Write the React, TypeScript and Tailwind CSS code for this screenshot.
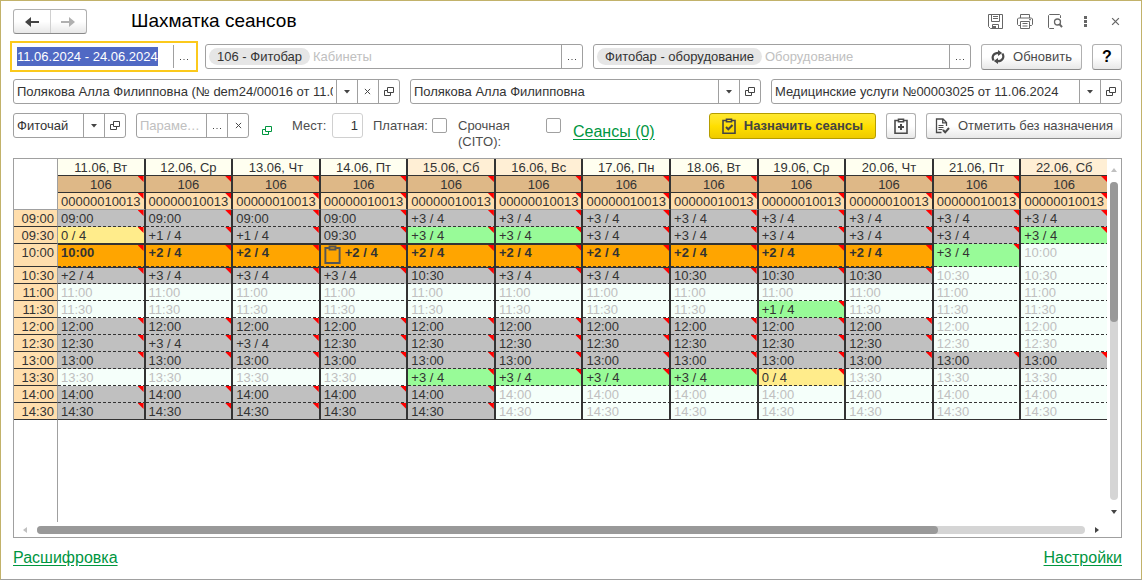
import { useEffect, useRef } from "react";
import type { ReactNode } from "react";
import { clsx } from "clsx";

type Tone = "busy" | "free" | "open" | "few" | "picked";

type Slot = { text: string; tone: Tone; icon?: boolean };

const days = [
  { label: "11.06, Вт" },
  { label: "12.06, Ср" },
  { label: "13.06, Чт" },
  { label: "14.06, Пт" },
  { label: "15.06, Сб", weekend: true },
  { label: "16.06, Вс", weekend: true },
  { label: "17.06, Пн" },
  { label: "18.06, Вт" },
  { label: "19.06, Ср" },
  { label: "20.06, Чт" },
  { label: "21.06, Пт" },
  { label: "22.06, Сб", weekend: true },
];

// b = busy, f = free, g = has places, y = no places left, o = picked
// a number after the letter is the count of taken places, otherwise the time is shown
const schedule: [string, string][] = [
  ["09:00", "b b b b b3 b3 b3 b3 b3 b3 b3 b3"],
  ["09:30", "y0 b1 b1 b g3 g3 b3 b3 b3 b3 b3 g3"],
  ["10:00", "o o2 o2 i2 o2 o2 o2 o2 o2 o2 g3 f"],
  ["10:30", "b2 b3 b3 b3 b b3 b3 b b b f f"],
  ["11:00", "f f f f f f f f f f f f"],
  ["11:30", "f f f f f f f f g1 f f f"],
  ["12:00", "b b b b b b b b b b f f"],
  ["12:30", "b b3 b3 b b b b b b b f f"],
  ["13:00", "b b b b b b b b b b b b"],
  ["13:30", "f f f f g3 g3 g3 g3 y0 f f f"],
  ["14:00", "b b b b b f f f f f f f"],
  ["14:30", "b b b b b f f f f f f f"],
];

const codes: Record<string, Tone> = {
  b: "busy",
  f: "free",
  g: "open",
  y: "few",
  o: "picked",
  i: "picked",
};

const tones: Record<Tone, string> = {
  busy: "bg-[#c0c0c0]",
  free: "bg-[#f5fffa] text-[#c0c0c0]",
  open: "bg-[#98fb98]",
  few: "bg-[#ffec8b]",
  picked: "bg-[#ffa500] font-bold",
};

function parseSlot(code: string, time: string): Slot {
  const taken = code.slice(1);
  const text = taken === "" ? time : taken === "0" ? "0 / 4" : `+${taken} / 4`;
  return { text, tone: codes[code[0]], icon: code[0] === "i" };
}

const rows = schedule.map(([time, row]) => ({
  time,
  slots: row.split(" ").map((code) => parseSlot(code, time)),
}));

/* ---------- icons ---------- */

function OpenIcon() {
  return (
    <svg viewBox="0 0 10 10" className="size-[10px]" fill="none" stroke="currentColor">
      <path d="M3.5.5h6v5h-6zM3 3.500H.5v5h6V6" />
    </svg>
  );
}

function DownIcon() {
  return (
    <svg viewBox="0 0 6 4" className="h-1 w-1.5" fill="currentColor">
      <path d="M0 0h6L3 3.500z" />
    </svg>
  );
}

function CrossIcon({ className }: { className?: string }) {
  return (
    <svg viewBox="0 0 8 8" className={className} fill="none" stroke="currentColor" strokeWidth="1.100">
      <path d="M1 1l6 6M7 1L1 7" />
    </svg>
  );
}

function DotsIcon() {
  return (
    <svg viewBox="0 0 8 2" className="mt-1.5 h-0.5 w-2" fill="currentColor">
      <path d="M0 0h1v1H0zM3.500 0h1v1h-1zM7 0h1v1H7z" />
    </svg>
  );
}

function ArrowIcon({ flip }: { flip?: boolean }) {
  return (
    <svg
      viewBox="0 0 14 10"
      className={clsx("h-2.5 w-3.5", flip && "rotate-180")}
      fill="none"
      stroke="currentColor"
      strokeWidth="2"
    >
      <path d="M14 5H3" />
      <path d="M6 0v10L0 5z" fill="currentColor" stroke="none" />
    </svg>
  );
}

function ClipboardIcon({ mark, className }: { mark?: "check" | "plus"; className?: string }) {
  return (
    <svg
      viewBox="0 0 14 16"
      className={clsx("shrink-0", className ?? "h-4 w-3.5")}
      fill="none"
      stroke="currentColor"
      strokeWidth="1.600"
    >
      <path d="M4 2.500H1v12.700h12V2.500h-3" />
      <path d="M4.500 1.200h5v2.600h-5z" />
      {mark === "check" && <path d="M4 9l2.300 2.300L10.500 7" strokeWidth="2" />}
      {mark === "plus" && <path d="M7 6v6M4 9h6" strokeWidth="2" />}
    </svg>
  );
}

function RefreshIcon() {
  return (
    <svg viewBox="0 0 14 14" className="size-3.5" fill="none" stroke="currentColor" strokeWidth="2.200">
      <path d="M2.600 10.500C.2 6.500 2.800 2.800 7.500 2.800" />
      <path d="M11.400 3.500C13.800 7.500 11.200 11.200 6.500 11.200" />
      <path d="M7 0l4.200 2.900L7 6zM7 14l-4.200-2.900L7 8z" fill="currentColor" stroke="none" />
    </svg>
  );
}

function DocCheckIcon() {
  return (
    <svg viewBox="0 0 15 16" className="h-4 w-[15px]" fill="none" stroke="currentColor" strokeWidth="1.300">
      <path d="M6.500 14.500H1.500V1H8l3.500 3.500V8M7.700 1v3.800h3.800" />
      <path d="M3.500 7.500h5M3.500 9.500h5M3.500 11.500h4" strokeWidth="1" />
      <path d="M8 12l2.200 2.300L14 10" strokeWidth="2" />
    </svg>
  );
}

function SaveIcon() {
  return (
    <svg viewBox="0 0 15 15" className="size-[15px]" fill="none" stroke="currentColor">
      <path d="M.5.5h14v14H2.500l-2-2z" />
      <path d="M3.500.5v7h8v-7M5 2.500h5M5 4.500h5M4.500 14.500v-4h6v4" />
      <path d="M5 12h3v2.500H5z" fill="currentColor" stroke="none" />
    </svg>
  );
}

function PrintIcon() {
  return (
    <svg viewBox="0 0 16 15" className="h-[15px] w-4" fill="none" stroke="currentColor">
      <path d="M3.500 4V.5h9V4M3.500 11.500h-2l-1-1V5l1-1h13l1 1v5.500l-1 1h-2" />
      <path d="M3.500 7.500h9v7h-9zM5.500 9.500h5M5.500 12h5M12 5.700h2" />
    </svg>
  );
}

function PreviewIcon() {
  return (
    <svg viewBox="0 0 15 15" className="size-[15px]" fill="none" stroke="currentColor">
      <path d="M6 14.500H1.500l-1-1v-12l1-1h10l1 1V4" />
      <circle cx="9.500" cy="8" r="3" strokeWidth="1.300" />
      <path d="M11.500 10.200l2.500 3" strokeWidth="2" />
    </svg>
  );
}

/* ---------- controls ---------- */

const fieldButton =
  "flex w-[21px] shrink-0 items-center justify-center border-l border-[#a0a0a0] text-[#444]";

const raised =
  "flex h-[26px] items-center justify-center rounded-[3px] border border-[#b0b0b0] border-b-[#8a8a8a] bg-linear-to-b from-white from-50% to-[#e8e8e8] text-[#4a4a4a]";

const checkbox = "mt-[5px] size-[15px] appearance-none rounded-[2px] border border-[#a0a0a0]";

type FieldProps = {
  label: string;
  value?: string;
  placeholder?: string;
  chip?: string;
  buttons: ("down" | "cross" | "open" | "dots")[];
  className?: string;
};

const buttonLabels = { down: "Выбрать", cross: "Очистить", open: "Открыть", dots: "Подобрать" };

function Field({ label, value, placeholder, chip, buttons, className }: FieldProps) {
  return (
    <div className={clsx("flex h-[25px] min-w-0 rounded-[3px] border border-[#a0a0a0] bg-white", className)}>
      {chip && (
        <span className="my-auto ml-[3px] shrink-0 rounded-full bg-[#e6e6e6] px-2 leading-[17px]">
          {chip}
        </span>
      )}
      <input
        aria-label={label}
        defaultValue={value}
        placeholder={placeholder}
        className="w-0 min-w-0 flex-1 px-[3px] outline-none placeholder:text-[#c0c0c0] placeholder-shown:text-ellipsis"
      />
      {buttons.map((b) => (
        <button key={b} type="button" aria-label={buttonLabels[b]} className={fieldButton}>
          {b === "down" && <DownIcon />}
          {b === "cross" && <CrossIcon className="size-[7px]" />}
          {b === "open" && <OpenIcon />}
          {b === "dots" && <DotsIcon />}
        </button>
      ))}
    </div>
  );
}

function PeriodField() {
  const ref = useRef<HTMLInputElement>(null);

  useEffect(() => {
    ref.current?.focus();
    ref.current?.select();
  }, []);

  return (
    <div className="-mx-[3px] flex h-[31px] w-[188px] shrink-0 border-2 border-[#fbc91c] bg-white py-0.5">
      <input
        ref={ref}
        aria-label="Период"
        defaultValue="11.06.2024 - 24.06.2024"
        className="w-0 flex-1 pl-[5px] outline-none selection:bg-[#5069c4] selection:text-white"
      />
      <button type="button" aria-label="Выбрать период" className={clsx(fieldButton, "mr-0.5")}>
        <DotsIcon />
      </button>
    </div>
  );
}

function IconButton({ label, children }: { label: string; children: ReactNode }) {
  return (
    <button type="button" aria-label={label} className="flex w-[30px] items-center justify-center">
      {children}
    </button>
  );
}

function Corner() {
  return (
    <span className="absolute top-0 right-0 size-[6px] bg-[#ff0000] [clip-path:polygon(0_0,100%_0,100%_100%)]" />
  );
}

/* ---------- schedule ---------- */

const dashes =
  "after:absolute after:inset-x-0 after:bottom-0 after:h-px after:bg-[repeating-linear-gradient(90deg,#333_0_3px,transparent_3px_5px)]";

function Schedule() {
  return (
    <table className="w-full table-fixed border-separate border-spacing-0 leading-[15px] text-[#333]">
      <colgroup>
        <col className="w-11" />
        {days.map((d) => (
          <col key={d.label} />
        ))}
      </colgroup>
      <thead>
        <tr className="h-[17px]">
          <td rowSpan={3} className="border-r border-b border-[#a0a0a0] bg-white p-0" />
          {days.map((d) => (
            <th
              key={d.label}
              className={clsx(
                "border-r-2 border-b border-[#333] p-0 pt-px font-normal",
                d.weekend ? "bg-[#ffefd5]" : "bg-[#fffff0]"
              )}
            >
              {d.label}
            </th>
          ))}
        </tr>
        <tr className="h-[17px]">
          {days.map((d) => (
            <th
              key={d.label}
              className="relative border-r-2 border-b border-[#333] bg-[#deb887] p-0 pt-px font-normal"
            >
              106
              <Corner />
            </th>
          ))}
        </tr>
        <tr className="h-[17px]">
          {days.map((d) => (
            <th
              key={d.label}
              className="relative border-r-2 border-b border-r-[#333] border-b-[#a0a0a0] bg-[#ffdead] p-0 pt-px font-normal"
            >
              00000010013
              <Corner />
            </th>
          ))}
        </tr>
      </thead>
      <tbody>
        {rows.map(({ time, slots }, r) => {
          const last = r === rows.length - 1;
          return (
            <tr key={time} className={time === "10:00" ? "h-[23px]" : "h-[17px]"}>
              <th className="border-r border-b border-r-[#a0a0a0] border-b-[#333] bg-[#ffdead] p-0 pt-px pr-[3px] text-right align-top font-normal">
                {time}
              </th>
              {slots.map((slot, i) => {
                const picked = slot.tone === "picked";
                const abovePicked = rows[r + 1]?.slots[i].tone === "picked";
                const topLine = picked || rows[r - 1]?.slots[i].tone === "picked";
                return (
                  <td
                    key={days[i].label}
                    className={clsx(
                      "relative border-r-2 border-[#333] p-0 pl-[3px] align-top",
                      tones[slot.tone],
                      topLine ? "border-t" : "pt-px",
                      last || abovePicked ? "border-b" : dashes
                    )}
                  >
                    <div className="flex h-[15px]">
                      {slot.icon && <ClipboardIcon className="mr-1 h-[19px] w-[17px] text-[#555]" />}
                      {slot.text}
                    </div>
                    {slot.tone !== "free" && <Corner />}
                  </td>
                );
              })}
            </tr>
          );
        })}
      </tbody>
    </table>
  );
}

function ScheduleFrame() {
  return (
    <section className="mt-[19px] flex flex-1 flex-col border border-[#a0a0a0]">
      <div className="flex flex-1">
        <div className="flex min-w-0 flex-1 flex-col overflow-hidden">
          <div className="-mr-0.5">
            <Schedule />
          </div>
          <div className="w-11 flex-1 border-r border-[#a0a0a0]" />
        </div>
        <div className="flex w-3.5 flex-col items-center pt-[9px] pb-2">
          <svg viewBox="0 0 6 4" className="h-1 w-1.5 fill-[#c0c0c0]">
            <path d="M0 4h6L3 0z" />
          </svg>
          <div className="my-2.5 flex w-2 flex-1 flex-col rounded-full bg-[#d5d5d5]">
            <div className="flex-[44] rounded-full bg-[#999]" />
            <div className="flex-[56]" />
          </div>
          <svg viewBox="0 0 6 4" className="h-1 w-1.5 fill-[#444]">
            <path d="M0 0h6L3 4z" />
          </svg>
        </div>
      </div>
      <div className="flex h-[15px] items-center pr-[22px] pl-[9px]">
        <svg viewBox="0 0 4 6" className="h-1.5 w-1 fill-[#c0c0c0]">
          <path d="M4 0v6L0 3z" />
        </svg>
        <div className="mx-2.5 h-2 flex-1 rounded-full bg-[#d5d5d5]">
          <div className="h-full w-[86%] rounded-full bg-[#999]" />
        </div>
        <svg viewBox="0 0 4 6" className="h-1.5 w-1 fill-[#444]">
          <path d="M0 0v6l4-3z" />
        </svg>
      </div>
    </section>
  );
}

export default function App() {
  return (
    <main className="flex min-h-screen flex-col border border-[#c2b26a] border-b-[#a0a0a0] bg-white pt-2 pr-[19px] pl-3 font-['Liberation_Sans',Arial,sans-serif] text-[13px] text-[#333]">
      {/* Title bar */}
      <header className="flex h-[25px] items-center">
        <div className="flex h-[25px] w-[74px] rounded-[3px] border border-[#b0b0b0] border-b-[#8a8a8a] bg-linear-to-b from-white from-50% to-[#e8e8e8]">
          <button type="button" aria-label="Назад" className="flex flex-1 items-center justify-center text-[#444]">
            <ArrowIcon />
          </button>
          <button
            type="button"
            aria-label="Вперед"
            className="flex flex-1 items-center justify-center border-l border-[#d0d0d0] text-[#b0b0b0]"
          >
            <ArrowIcon flip />
          </button>
        </div>
        <h1 className="ml-11 text-[19px] text-black">Шахматка сеансов</h1>
        <div className="-mr-2 ml-auto flex text-[#666]">
          <IconButton label="Сохранить">
            <SaveIcon />
          </IconButton>
          <IconButton label="Печать">
            <PrintIcon />
          </IconButton>
          <IconButton label="Просмотр">
            <PreviewIcon />
          </IconButton>
          <IconButton label="Еще">
            <svg viewBox="0 0 3 11" className="h-[11px] w-[3px]" fill="currentColor">
              <path d="M0 0h3v3H0zM0 4h3v3H0zM0 8h3v3H0z" />
            </svg>
          </IconButton>
          <IconButton label="Закрыть">
            <CrossIcon className="size-[9px]" />
          </IconButton>
        </div>
      </header>

      {/* Filters */}
      <div className="mt-[7px] flex h-[31px] items-center gap-2.5">
        <PeriodField />
        <Field label="Кабинеты" chip="106 - Фитобар" placeholder="Кабинеты" buttons={["dots"]} className="flex-1" />
        <Field
          label="Оборудование"
          chip="Фитобар - оборудование"
          placeholder="Оборудование"
          buttons={["dots"]}
          className="flex-1"
        />
        <button type="button" className={clsx(raised, "w-[101px] shrink-0 gap-2")}>
          <RefreshIcon />
          Обновить
        </button>
        <button
          type="button"
          aria-label="Справка"
          className={clsx(raised, "w-[30px] shrink-0 text-base font-bold text-black")}
        >
          ?
        </button>
      </div>

      <div className="mt-[7px] flex gap-2.5">
        <Field
          label="Назначение"
          value="Полякова Алла Филипповна (№ dem24/00016 от 11.06.2024)"
          buttons={["down", "cross", "open"]}
          className="flex-[387]"
        />
        <Field label="Пациент" value="Полякова Алла Филипповна" buttons={["down", "open"]} className="flex-[351]" />
        <Field
          label="Основание"
          value="Медицинские услуги №00003025 от 11.06.2024"
          buttons={["down", "open"]}
          className="flex-[351]"
        />
      </div>

      <div className="mt-[9px] flex h-[26px]">
        <Field label="Услуга" value="Фиточай" buttons={["down", "open"]} className="w-[113px]" />
        <Field
          label="Параметры"
          placeholder="Параметры"
          buttons={["dots", "cross"]}
          className="ml-2.5 w-[113px]"
        />
        <button type="button" aria-label="Показать связи" className="mt-2.5 ml-[13px] text-[#00963f]">
          <OpenIcon />
        </button>
        <label className="ml-5 flex items-start text-[#4d4d4d]">
          <span className="w-10 leading-[25px]">Мест:</span>
          <input
            defaultValue="1"
            className="h-[25px] w-[31px] rounded-[3px] border border-[#d0d0d0] px-1 text-right text-[#333] outline-none"
          />
        </label>
        <label className="ml-2.5 flex items-start text-[#4d4d4d]">
          <span className="w-[59px] leading-[25px]">Платная:</span>
          <input type="checkbox" className={checkbox} />
        </label>
        <label className="ml-[11px] flex items-start text-[#4d4d4d]">
          <span className="mt-[5px] w-[88px] leading-4">
            Срочная
            <br />
            (CITO):
          </span>
          <input type="checkbox" className={checkbox} />
        </label>
        <a href="#sessions" className="mt-2 ml-3 text-base leading-[22px] text-[#00963f] underline underline-offset-2">
          Сеансы (0)
        </a>
        <div className="ml-auto flex gap-2.5">
          <button
            type="button"
            className="flex h-[26px] w-[167px] items-center justify-center gap-2 rounded-[3px] border border-[#b59d00] bg-linear-to-b from-[#ffe92e] via-[#ffdf00] to-[#efcb00] font-bold text-[#444]"
          >
            <ClipboardIcon mark="check" />
            Назначить сеансы
          </button>
          <button type="button" aria-label="Добавить назначение" className={clsx(raised, "w-[30px]")}>
            <ClipboardIcon mark="plus" />
          </button>
          <button type="button" className={clsx(raised, "w-[196px] gap-2")}>
            <DocCheckIcon />
            Отметить без назначения
          </button>
        </div>
      </div>

      <ScheduleFrame />

      <footer className="flex h-[41px] items-center justify-between pb-0.5 text-base text-[#00963f]">
        <a href="#legend" className="underline underline-offset-2">
          Расшифровка
        </a>
        <a href="#settings" className="underline underline-offset-2">
          Настройки
        </a>
      </footer>
    </main>
  );
}
